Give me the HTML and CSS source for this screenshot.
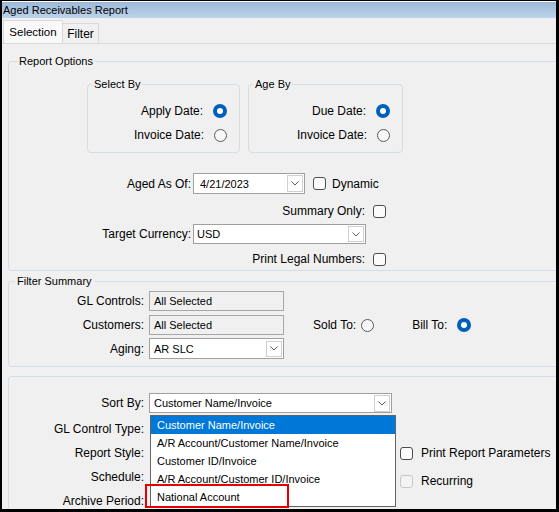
FILE: index.html
```html
<!DOCTYPE html>
<html>
<head>
<meta charset="utf-8">
<link rel="stylesheet" href="styles.css">
</head>
<body>
<div class="window">
  <div class="titlebar">Aged Receivables Report</div>
  <div class="tabstrip">
    <div class="tab active">Selection</div>
    <div class="tab filter">Filter</div>
  </div>
  <div class="page">
    <fieldset class="group report-options">
      <legend>Report Options</legend>
      <div class="subgroups">
        <fieldset class="sub select-by">
          <legend>Select By</legend>
          <div class="opt"><span>Apply Date:</span><span class="radio on"></span></div>
          <div class="opt"><span>Invoice Date:</span><span class="radio"></span></div>
        </fieldset>
        <fieldset class="sub age-by">
          <legend>Age By</legend>
          <div class="opt"><span>Due Date:</span><span class="radio on"></span></div>
          <div class="opt"><span>Invoice Date:</span><span class="radio"></span></div>
        </fieldset>
      </div>
      <div class="row r1">
        <span class="lbl-a">Aged As Of:</span>
        <div class="combo date"><span>4/21/2023</span><span class="btn"><svg width="8" height="5" viewBox="0 0 8 5"><polyline points="0.5,0.5 4,4 7.5,0.5" fill="none" stroke="#606060" stroke-width="1"/></svg></span></div>
        <span class="check dyn"></span><span class="dyn-text">Dynamic</span>
      </div>
      <div class="row r2">
        <span class="lbl-b">Summary Only:</span><span class="check"></span>
      </div>
      <div class="row r3">
        <span class="lbl-a">Target Currency:</span>
        <div class="combo currency"><span>USD</span><span class="btn small"><svg width="8" height="5" viewBox="0 0 8 5"><polyline points="0.5,0.5 4,4 7.5,0.5" fill="none" stroke="#606060" stroke-width="1"/></svg></span></div>
      </div>
      <div class="row r4">
        <span class="lbl-b">Print Legal Numbers:</span><span class="check"></span>
      </div>
    </fieldset>

    <fieldset class="group filter-summary">
      <legend>Filter Summary</legend>
      <div class="frow first">
        <span class="lbl-c">GL Controls:</span><div class="ro">All Selected</div>
      </div>
      <div class="frow customers-row">
        <span class="lbl-c">Customers:</span><div class="ro">All Selected</div>
        <span class="sold">Sold To:</span><span class="radio sold-radio"></span>
        <span class="bill">Bill To:</span><span class="radio on bill-radio"></span>
      </div>
      <div class="frow aging-row">
        <span class="lbl-c">Aging:</span>
        <div class="combo aging"><span>AR SLC</span><span class="btn small"><svg width="8" height="5" viewBox="0 0 8 5"><polyline points="0.5,0.5 4,4 7.5,0.5" fill="none" stroke="#606060" stroke-width="1"/></svg></span></div>
      </div>
    </fieldset>

    <fieldset class="group output">
      <div class="frow sort-row">
        <span class="lbl-c">Sort By:</span>
        <div class="combo sort">
          <span>Customer Name/Invoice</span><span class="btn"><svg width="8" height="5" viewBox="0 0 8 5"><polyline points="0.5,0.5 4,4 7.5,0.5" fill="none" stroke="#606060" stroke-width="1"/></svg></span>
          <div class="dropdown">
            <div class="item sel">Customer Name/Invoice</div>
            <div class="item">A/R Account/Customer Name/Invoice</div>
            <div class="item">Customer ID/Invoice</div>
            <div class="item">A/R Account/Customer ID/Invoice</div>
            <div class="item">National Account</div>
            <div class="callout"></div>
          </div>
        </div>
      </div>
      <div class="grow first">
        <span class="lbl-c">GL Control Type:</span>
      </div>
      <div class="grow">
        <span class="lbl-c">Report Style:</span>
        <div class="side"><span class="check"></span><span class="side-text">Print Report Parameters</span></div>
      </div>
      <div class="grow">
        <span class="lbl-c">Schedule:</span>
        <div class="side recurring"><span class="check disabled"></span><span class="side-text">Recurring</span></div>
      </div>
      <div class="grow">
        <span class="lbl-c">Archive Period:</span>
      </div>
    </fieldset>
  </div>
</div>
</body>
</html>
```
FILE: styles.css
```css
html, body {
  margin: 0;
  padding: 0;
}
body {
  background: #000;
  width: 559px;
  height: 512px;
  overflow: hidden;
  font-family: "Liberation Sans", Arial, sans-serif;
  font-size: 12px;
  color: #000;
}
.window {
  margin: 1px 0 0 2px;
  width: 554px;
  height: 508px;
  background: #f0f0f0;
  overflow: hidden;
  display: flex;
  flex-direction: column;
}
.titlebar {
  flex: none;
  height: 15px;
  padding: 1px 0 0 1px;
  border-top: 1px solid #fff;
  background: linear-gradient(#9db9d8, #bdd3ea);
  font-size: 11px;
  line-height: 15px;
  white-space: nowrap;
}
.tabstrip {
  flex: none;
  height: 25px;
  display: flex;
  align-items: flex-end;
  padding-left: 1px;
  border-bottom: 1px solid #d9d9d9;
}
.tab {
  box-sizing: border-box;
  border: 1px solid #d9d9d9;
  border-bottom: none;
  text-align: center;
  font-size: 11.5px;
}
.tab.active {
  width: 60px;
  height: 23px;
  line-height: 22px;
  background: #f9f9f9;
}
.tab.filter {
  width: 36px;
  height: 20px;
  line-height: 21px;
  border-left: none;
  font-size: 12px;
}
.page {
  flex: 1;
  padding-left: 6px;
}
fieldset {
  margin: 0;
  padding: 0;
  min-width: 0;
  box-sizing: border-box;
  border: 1px solid #d4dce5;
  border-radius: 3px;
}
legend {
  padding: 0 2px;
  font-size: 11px;
  line-height: 15px;
}
.group {
  width: 600px;
}
.group > legend {
  margin-left: 8px;
}
.report-options {
  margin-top: 10px;
  padding-bottom: 1px;
}
.subgroups {
  display: flex;
  gap: 8px;
  padding: 8px 0 0 78px;
}
.sub {
  width: 153px;
  padding: 7px 12px 5px 0;
  border-radius: 4px;
}
.sub.age-by {
  width: 155px;
}
.sub legend {
  margin-left: 4px;
}
.opt {
  height: 24px;
  display: flex;
  align-items: center;
  justify-content: flex-end;
  gap: 10px;
}
.radio {
  flex: none;
  width: 13px;
  height: 13px;
  box-sizing: border-box;
  border-radius: 50%;
  border: 1px solid #5a5a5a;
  background: #f7f7f7;
}
.radio.on {
  border: none;
  width: 14px;
  height: 14px;
  background: #005fb8;
  display: flex;
  align-items: center;
  justify-content: center;
}
.radio.on::after {
  content: "";
  width: 6px;
  height: 6px;
  border-radius: 50%;
  background: #fff;
}
.check {
  flex: none;
  width: 13px;
  height: 13px;
  box-sizing: border-box;
  border: 1px solid #4d4d4d;
  border-radius: 3px;
  background: #fbfbfb;
}
.check.disabled {
  border-color: #c6c6c6;
  background: #f3f3f3;
}
.row {
  display: flex;
  align-items: center;
  white-space: nowrap;
}
.r1 { margin-top: 20px; height: 21px; }
.r2 { margin-top: 7px; height: 20px; }
.r3 { margin-top: 3px; height: 20px; }
.r4 { margin-top: 5px; height: 20px; }
.lbl-a {
  flex: none;
  width: 182px;
  margin-right: 2px;
  text-align: right;
}
.lbl-b {
  flex: none;
  width: 356px;
  margin-right: 8px;
  text-align: right;
}
.lbl-c {
  flex: none;
  width: 135px;
  margin-right: 5px;
  text-align: right;
}
.combo {
  flex: none;
  box-sizing: border-box;
  height: 21px;
  border: 1px solid #a0a0a0;
  background: #fff;
  display: flex;
  align-items: center;
  padding: 0 1px 0 4px;
  font-size: 11px;
  white-space: nowrap;
}
.combo.date {
  width: 112px;
  padding-left: 6px;
}
.combo.currency {
  width: 173px;
  height: 20px;
  padding-left: 3px;
}
.combo.aging {
  width: 135px;
}
.combo.sort {
  width: 243px;
  height: 20px;
  position: relative;
}
.btn {
  margin-left: auto;
  flex: none;
  width: 16px;
  height: 17px;
  box-sizing: border-box;
  border: 1px solid #d0d0d0;
  background: #fff;
  display: flex;
  align-items: center;
  justify-content: center;
}
.btn.small {
  height: 16px;
}
.check.dyn {
  margin-left: 8px;
}
.dyn-text {
  margin-left: 6px;
}
.filter-summary {
  margin-top: 3px;
  padding: 2px 0 7px;
}
.filter-summary > legend {
  margin-left: 6px;
}
.frow {
  display: flex;
  align-items: center;
  height: 20px;
  white-space: nowrap;
}
.frow.customers-row {
  margin-top: 4px;
}
.frow.aging-row {
  margin-top: 3px;
  height: 21px;
}
.ro {
  flex: none;
  box-sizing: border-box;
  width: 135px;
  height: 20px;
  border: 1px solid #a7a7a7;
  background: #f0f0f0;
  font-size: 11px;
  line-height: 18px;
  padding-left: 4px;
}
.sold { margin-left: 29px; }
.sold-radio { margin-left: 5px; }
.bill { margin-left: 38px; }
.bill-radio { margin-left: 10px; }
.output {
  margin-top: 9px;
  padding-top: 16px;
  height: 200px;
}
.sort-row {
  position: relative;
  z-index: 2;
}
.grow {
  display: flex;
  align-items: center;
  height: 24px;
  white-space: nowrap;
}
.grow.first {
  margin-top: 4px;
}
.side {
  display: flex;
  align-items: center;
  margin-left: 251px;
}
.side.recurring {
  margin-top: 8px;
}
.side-text {
  margin-left: 8px;
}
.dropdown {
  position: absolute;
  left: 0;
  top: 21px;
  width: 246px;
  height: 92px;
  box-sizing: border-box;
  border: 1px solid #646464;
  background: #fff;
  font-size: 11px;
  z-index: 3;
}
.item {
  height: 18px;
  line-height: 18px;
  padding-left: 6px;
  white-space: nowrap;
}
.item.sel {
  background: #0078d7;
  color: #fff;
}
.callout {
  position: absolute;
  left: -6px;
  top: 68px;
  width: 144px;
  height: 24px;
  box-sizing: border-box;
  border: 2px solid #e30000;
}
```
